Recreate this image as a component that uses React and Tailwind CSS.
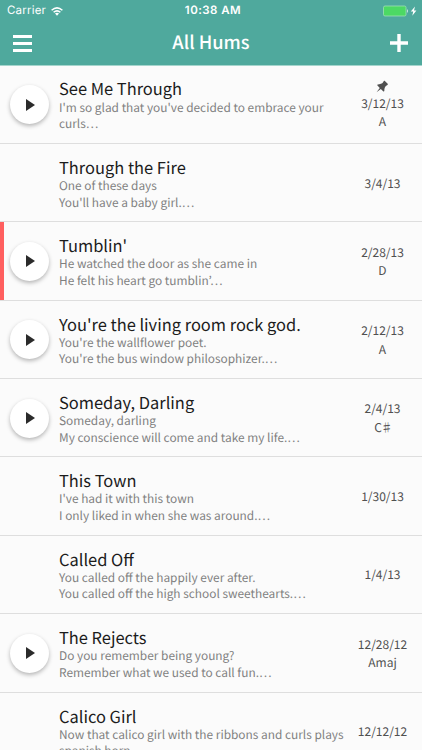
import { TiPin } from "react-icons/ti";

const hums = [
  { title: "See Me Through", lines: ["I'm so glad that you've decided to embrace your", "curls"], date: "3/12/13", tone: "A", play: true, pinned: true },
  { title: "Through the Fire", lines: ["One of these days", "You'll have a baby girl."], date: "3/4/13" },
  { title: "Tumblin'", lines: ["He watched the door as she came in", "He felt his heart go tumblin’"], date: "2/28/13", tone: "D", play: true, marked: true },
  { title: "You're the living room rock god.", lines: ["You're the wallflower poet.", "You're the bus window philosophizer."], date: "2/12/13", tone: "A", play: true },
  { title: "Someday, Darling", lines: ["Someday, darling", "My conscience will come and take my life."], date: "2/4/13", tone: "C♯", play: true },
  { title: "This Town", lines: ["I've had it with this town", "I only liked in when she was around."], date: "1/30/13" },
  { title: "Called Off", lines: ["You called off the happily ever after.", "You called off the high school sweethearts."], date: "1/4/13" },
  { title: "The Rejects", lines: ["Do you remember being young?", "Remember what we used to call fun."], date: "12/28/12", tone: "Amaj", play: true },
  { title: "Calico Girl", lines: ["Now that calico girl with the ribbons and curls plays", "spanish horn"], date: "12/12/12" },
];

function PlayButton() {
  return (
    <button className="flex size-[39px] items-center justify-center rounded-full bg-white shadow-[0_2px_4px_rgba(0,0,0,0.28)]">
      <svg viewBox="0 0 9 12" className="ml-[1px] h-[12px] w-[9px] fill-[#2b2b2b]"><path d="M0 0L9 6L0 12Z" /></svg>
    </button>
  );
}

function HumRow({ hum }) {
  return (
    <li className="flex h-[78.4px] shrink-0 border-b border-[#dedede]">
      <div className={`w-[4px] ${hum.marked ? "bg-[#ff5f5f]" : ""}`} />
      <div className="flex w-[55px] items-center pl-[6.4px] pt-[1px]">{hum.play && <PlayButton />}</div>
      <div className="w-[290px] whitespace-nowrap pt-[12px]">
        <h2 className="text-[16.45px] leading-[23px] text-[#1c1c1c]">{hum.title}</h2>
        <p className="-mt-[0.9px] text-[11.88px] leading-[16.6px] text-[#808080]">
          {hum.lines[0]}<br />{hum.lines[1]}…
        </p>
      </div>
      <div className="flex w-[67px] flex-col items-center justify-center pt-[2.6px] text-[12px] leading-[18.5px] text-[#505050]">
        {hum.pinned && <TiPin className="-ml-[2px] -mt-[1px] size-[17px]" />}
        <span>{hum.date}</span>
        {hum.tone && <span className={hum.tone === "C♯" ? "-mr-[1px] tracking-[-1.2px]" : ""}>{hum.tone}</span>}
      </div>
    </li>
  );
}

export default function App() {
  return (
    <div className="flex h-[750px] w-[422px] flex-col overflow-hidden bg-[#fbfbfb] font-['Noto_Sans_CJK_KR','Noto_Sans',sans-serif] [text-rendering:geometricPrecision]">
      <header className="h-[66px] shrink-0 border-b border-[#a5d5cd] bg-[#4fa99d] text-white">
        <div className="grid h-[22px] grid-cols-3 items-center pl-[7px] pr-[5px] font-['Inter',sans-serif] text-[11.5px]">
          <div className="flex items-center gap-[5px] tracking-[0.2px]">
            Carrier
            <svg viewBox="0 0 12 9" className="h-[9px] w-[12px]" fill="none" stroke="white" strokeWidth="1.5"><path d="M.6 3.2Q6-1.4 11.4 3.2M2.6 5.3Q6 2.4 9.4 5.3" /><path d="M4 6.6Q6 5 8 6.6L6 8.8Z" fill="white" stroke="none" /></svg>
          </div>
          <div className="pl-[2px] text-center font-semibold tracking-[0.45px]">10:38 AM</div>
          <div className="flex items-center justify-end">
            <svg viewBox="0 0 34 12" className="h-[12px] w-[34px]"><rect x=".5" y="1" width="22.5" height="10" rx="1.5" fill="#4cd964" stroke="#a0e0b5" strokeWidth=".8" /><path d="M24 4Q26 6 24 8Z" fill="#cce8df" /><path d="M32 1.5L27.8 6.6H30.2L29.3 10.8L33.4 5.4H31Z" fill="white" /></svg>
          </div>
        </div>
        <div className="flex h-[42px] items-center justify-between pl-[13px] pr-[14px]">
          <svg viewBox="0 0 19 17" className="h-[17px] w-[19px] fill-white"><path d="M0 0H19V3H0ZM0 7H19V10H0ZM0 14H19V17H0Z" /></svg>
          <h1 className="-mt-[3px] text-[18.3px] leading-[24px] font-medium">All Hums</h1>
          <svg viewBox="0 0 18 18" className="size-[18px] fill-white"><path d="M7.3 0H10.7V7.3H18V10.7H10.7V18H7.3V10.7H0V7.3H7.3Z" /></svg>
        </div>
      </header>
      <ul className="-mt-[0.6px] flex flex-col">
        {hums.map((hum) => <HumRow key={hum.title} hum={hum} />)}
      </ul>
    </div>
  );
}
